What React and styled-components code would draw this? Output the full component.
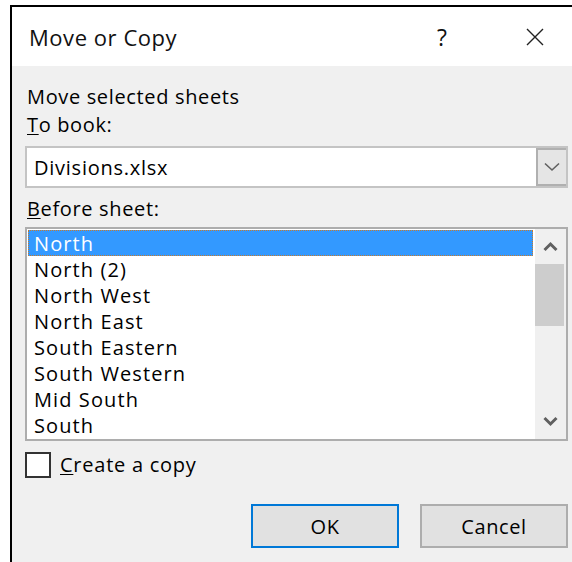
import React from "react";
import styled, { createGlobalStyle } from "styled-components";

const GlobalStyle = createGlobalStyle`
  html, body {
    margin: 0;
    padding: 0;
    background: #ffffff;
  }
  body {
    font-family: "Open Sans", "Noto Sans", "Liberation Sans", sans-serif;
    color: #000;
  }
`;

const Screen = styled.div`
  width: 572px;
  height: 562px;
  overflow: hidden;
  padding: 5px 0 0 10px;
  box-sizing: border-box;
`;

const Dialog = styled.div`
  border-left: 2px solid #000;
  border-top: 2px solid #000;
  height: 100%;
  display: flex;
  flex-direction: column;
  background: #f0f0f0;
`;

const TitleBar = styled.div`
  height: 59px;
  background: #fff;
  display: flex;
  align-items: center;
  padding-left: 17px;
  flex-shrink: 0;
`;

const Title = styled.div`
  font-size: 22px;
  flex: 1;
  letter-spacing: 0.55px;
  color: #111;
`;

const HelpGlyph = styled.div`
  width: 20px;
  font-size: 23px;
  text-align: center;
  margin-right: 74px;
  color: #111;
`;

const CloseIcon = styled.svg`
  width: 18px;
  height: 18px;
  margin-right: 28px;
`;

const Body = styled.div`
  flex: 1;
  padding: 17px 4px 0 13px;
  display: flex;
  flex-direction: column;
`;

const Label = styled.div`
  font-size: 20px;
  height: 28px;
  line-height: 28px;
  padding-left: 2px;
  letter-spacing: 0.65px;
  margin-top: ${(p) => p.$gap || 0}px;
  u {
    text-decoration-thickness: 1px;
    text-underline-offset: 2px;
  }
`;

const Combo = styled.div`
  margin-top: 7px;
  height: 42px;
  box-sizing: border-box;
  border: 2px solid #c4c4c4;
  background: #fff;
  display: flex;
  align-items: stretch;
`;

const ComboText = styled.div`
  flex: 1;
  font-size: 20px;
  display: flex;
  align-items: center;
  padding-left: 7px;
  letter-spacing: 0.75px;
`;

const ComboButton = styled.div`
  width: 30px;
  box-sizing: border-box;
  border: 2px solid #b0b0b0;
  border-right-width: 0;
  background: #e5e5e5;
  display: flex;
  align-items: center;
  justify-content: center;
`;

const ListBox = styled.div`
  margin-top: 4px;
  height: 214px;
  box-sizing: border-box;
  border: 2px solid #adadad;
  background: #fff;
  display: flex;
`;

const Items = styled.div`
  flex: 1;
  padding: 1px 2px 0 1px;
  display: flex;
  flex-direction: column;
`;

const Item = styled.div`
  height: 26px;
  flex-shrink: 0;
  box-sizing: border-box;
  font-size: 20px;
  line-height: 25px;
  padding-left: 5px;
  letter-spacing: 1.1px;
  border: 1px ${(p) => (p.$selected ? "dotted #c97a2a" : "solid transparent")};
  background: ${(p) => (p.$selected ? "#3399ff" : "transparent")};
  color: ${(p) => (p.$selected ? "#fff" : "#000")};
`;

const ScrollBar = styled.div`
  width: 31px;
  background: #f0f0f0;
  display: flex;
  flex-direction: column;
  align-items: center;
`;

const ArrowBox = styled.div`
  height: 35px;
  width: 100%;
  display: flex;
  align-items: center;
  justify-content: center;
`;

const Thumb = styled.div`
  width: 29px;
  height: 62px;
  background: #cdcdcd;
  align-self: flex-start;
`;

const Spacer = styled.div`
  flex: 1;
`;

const CheckRow = styled.label`
  margin-top: 10px;
  display: flex;
  align-items: center;
  gap: 9px;
  font-size: 20px;
  letter-spacing: 0.75px;
  u {
    text-decoration-thickness: 1px;
    text-underline-offset: 2px;
  }
`;

const CheckBox = styled.span`
  width: 26px;
  height: 26px;
  box-sizing: border-box;
  border: 2px solid #333;
  background: #fff;
  display: inline-block;
`;

const ButtonRow = styled.div`
  margin-top: 26px;
  display: flex;
  justify-content: flex-end;
  gap: 21px;
`;

const Button = styled.button`
  width: 148px;
  height: 44px;
  box-sizing: border-box;
  background: #e1e1e1;
  border: 2px solid ${(p) => (p.$default ? "#0078d7" : "#adadad")};
  font-family: inherit;
  font-size: 20px;
  color: #000;
  padding: 0;
  letter-spacing: 0.6px;
`;

const sheets = [
  "North",
  "North (2)",
  "North West",
  "North East",
  "South Eastern",
  "South Western",
  "Mid South",
  "South",
];

export default function App() {
  return (
    <>
      <GlobalStyle />
      <Screen>
        <Dialog>
          <TitleBar>
            <Title>Move or Copy</Title>
            <HelpGlyph>?</HelpGlyph>
            <CloseIcon viewBox="0 0 18 18">
              <path d="M1 1 L17 17 M17 1 L1 17" stroke="#222" strokeWidth="1.4" fill="none" />
            </CloseIcon>
          </TitleBar>
          <Body>
            <Label>Move selected sheets</Label>
            <Label>
              <u>T</u>o book:
            </Label>
            <Combo>
              <ComboText>Divisions.xlsx</ComboText>
              <ComboButton>
                <svg width="16" height="10" viewBox="0 0 16 10">
                  <path d="M1 1.5 L8 8 L15 1.5" stroke="#606060" strokeWidth="1.6" fill="none" />
                </svg>
              </ComboButton>
            </Combo>
            <Label $gap={7}>
              <u>B</u>efore sheet:
            </Label>
            <ListBox>
              <Items>
                {sheets.map((s, i) => (
                  <Item key={s} $selected={i === 0}>
                    {s}
                  </Item>
                ))}
              </Items>
              <ScrollBar>
                <ArrowBox>
                  <svg width="15" height="11" viewBox="0 0 15 11">
                    <path d="M1.5 9 L7.5 3 L13.5 9" stroke="#606060" strokeWidth="3" fill="none" />
                  </svg>
                </ArrowBox>
                <Thumb />
                <Spacer />
                <ArrowBox>
                  <svg width="15" height="11" viewBox="0 0 15 11">
                    <path d="M1.5 2 L7.5 8 L13.5 2" stroke="#606060" strokeWidth="3" fill="none" />
                  </svg>
                </ArrowBox>
              </ScrollBar>
            </ListBox>
            <CheckRow>
              <CheckBox />
              <span>
                <u>C</u>reate a copy
              </span>
            </CheckRow>
            <ButtonRow>
              <Button $default>OK</Button>
              <Button>Cancel</Button>
            </ButtonRow>
          </Body>
        </Dialog>
      </Screen>
    </>
  );
}
